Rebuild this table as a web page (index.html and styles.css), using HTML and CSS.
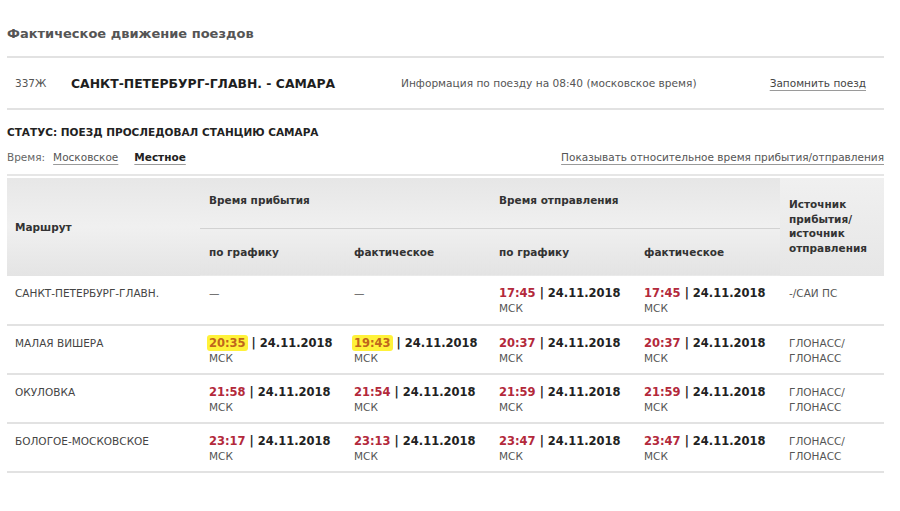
FILE: index.html
```html
<!DOCTYPE html>
<html lang="ru">
<head>
<meta charset="utf-8">
<title>Фактическое движение поездов</title>
<link rel="stylesheet" href="styles.css">
</head>
<body>
<div class="page">
  <h1 class="title">Фактическое движение поездов</h1>
  <div class="train">
    <span class="train-num">337Ж</span>
    <span class="train-route">САНКТ-ПЕТЕРБУРГ-ГЛАВН. - САМАРА</span>
    <span class="train-info">Информация по поезду на 08:40 (московское время)</span>
    <a class="link train-save" href="#">Запомнить поезд</a>
  </div>
  <div class="status">СТАТУС: ПОЕЗД ПРОСЛЕДОВАЛ СТАНЦИЮ САМАРА</div>
  <div class="timebar">
    <span class="time-label">Время:</span>
    <a class="link time-opt" href="#">Московское</a>
    <a class="link time-opt active" href="#">Местное</a>
    <a class="link rel-link" href="#">Показывать относительное время прибытия/отправления</a>
  </div>
  <table class="sched">
    <colgroup>
      <col class="c-route"><col class="c-t"><col class="c-t"><col class="c-t"><col class="c-t"><col class="c-src">
    </colgroup>
    <thead>
      <tr class="h1">
        <th rowspan="2" class="th-route">Маршрут</th>
        <th colspan="2" class="th-group">Время прибытия</th>
        <th colspan="2" class="th-group">Время отправления</th>
        <th rowspan="2" class="th-src">Источник прибытия/ источник отправления</th>
      </tr>
      <tr class="h2">
        <th>по графику</th>
        <th>фактическое</th>
        <th>по графику</th>
        <th>фактическое</th>
      </tr>
    </thead>
    <tbody>
      <tr>
        <td class="st">САНКТ-ПЕТЕРБУРГ-ГЛАВН.</td>
        <td class="dash">—</td>
        <td class="dash">—</td>
        <td><span class="tm">17:45</span><b class="dt"> | 24.11.2018</b><br><span class="tz">МСК</span></td>
        <td><span class="tm">17:45</span><b class="dt"> | 24.11.2018</b><br><span class="tz">МСК</span></td>
        <td class="src">-/САИ ПС</td>
      </tr>
      <tr>
        <td class="st">МАЛАЯ ВИШЕРА</td>
        <td><span class="tm hl">20:35</span><b class="dt"> | 24.11.2018</b><br><span class="tz">МСК</span></td>
        <td><span class="tm hl">19:43</span><b class="dt"> | 24.11.2018</b><br><span class="tz">МСК</span></td>
        <td><span class="tm">20:37</span><b class="dt"> | 24.11.2018</b><br><span class="tz">МСК</span></td>
        <td><span class="tm">20:37</span><b class="dt"> | 24.11.2018</b><br><span class="tz">МСК</span></td>
        <td class="src">ГЛОНАСС/<br>ГЛОНАСС</td>
      </tr>
      <tr>
        <td class="st">ОКУЛОВКА</td>
        <td><span class="tm">21:58</span><b class="dt"> | 24.11.2018</b><br><span class="tz">МСК</span></td>
        <td><span class="tm">21:54</span><b class="dt"> | 24.11.2018</b><br><span class="tz">МСК</span></td>
        <td><span class="tm">21:59</span><b class="dt"> | 24.11.2018</b><br><span class="tz">МСК</span></td>
        <td><span class="tm">21:59</span><b class="dt"> | 24.11.2018</b><br><span class="tz">МСК</span></td>
        <td class="src">ГЛОНАСС/<br>ГЛОНАСС</td>
      </tr>
      <tr>
        <td class="st">БОЛОГОЕ-МОСКОВСКОЕ</td>
        <td><span class="tm">23:17</span><b class="dt"> | 24.11.2018</b><br><span class="tz">МСК</span></td>
        <td><span class="tm">23:13</span><b class="dt"> | 24.11.2018</b><br><span class="tz">МСК</span></td>
        <td><span class="tm">23:47</span><b class="dt"> | 24.11.2018</b><br><span class="tz">МСК</span></td>
        <td><span class="tm">23:47</span><b class="dt"> | 24.11.2018</b><br><span class="tz">МСК</span></td>
        <td class="src">ГЛОНАСС/<br>ГЛОНАСС</td>
      </tr>
    </tbody>
  </table>
</div>
</body>
</html>
```

FILE: styles.css
```css
* { box-sizing: border-box; }
html, body { margin: 0; padding: 0; background: #fff; }
body {
  font-family: "DejaVu Sans", Verdana, sans-serif;
  font-size: 11px;
  color: #444;
}
.page {
  width: 884px;
  padding: 26px 0 0 7px;
}
.title {
  margin: 0;
  font-size: 13px;
  line-height: 16px;
  font-weight: bold;
  color: #555;
  padding-bottom: 14px;
  border-bottom: 2px solid #e2e2e2;
}
.link {
  color: #555;
  text-decoration: underline;
  text-decoration-color: #9a9a9a;
  text-underline-offset: 3px;
}
.train {
  display: flex;
  align-items: center;
  height: 52px;
  padding: 0 18px 0 8px;
  border-bottom: 2px solid #e2e2e2;
}
.train-num {
  width: 56px;
  color: #555;
  font-size: 10.5px;
}
.train-route {
  width: 330px;
  font-weight: bold;
  font-size: 12.4px;
  color: #1e1e1e;
}
.train-info {
  color: #555;
  font-size: 10.6px;
}
.train-save {
  margin-left: auto;
  font-size: 10.5px;
  color: #444;
}
.status {
  padding-top: 15px;
  line-height: 14px;
  font-weight: bold;
  font-size: 10.5px;
  color: #222;
}
.timebar {
  display: flex;
  align-items: baseline;
  margin-top: 11px;
  line-height: 14px;
  font-size: 10.5px;
  padding-bottom: 10px;
  border-bottom: 2px solid #e6e6e6;
}
.time-label { color: #666; margin-right: 8px; }
.time-opt { margin-right: 16px; }
.time-opt.active { font-weight: bold; color: #222; }
.rel-link { margin-left: auto; }
.sched {
  margin-top: 2px;
  width: 877px;
  border-collapse: collapse;
  table-layout: fixed;
}
.c-route { width: 193px; }
.c-t { width: 145px; }
.c-src { width: 104px; }
.sched th {
  text-align: left;
  font-weight: bold;
  font-size: 10.5px;
  color: #333;
  padding: 0 0 0 9px;
  vertical-align: middle;
}
.sched thead {
  background: #ebebeb;
}
.sched .h1 th { height: 50px; }
.sched .h2 th { height: 48px; }
.th-route {
  padding-left: 8px !important;
  background: linear-gradient(#e7e7e7, #f0f0f0 50%, #e4e4e4);
}
.th-group {
  padding-bottom: 6px !important;
  background: linear-gradient(#e6e6e6, #f0f0f0);
  border-bottom: 1px solid #d2d2d2;
}
.h2 th { background: linear-gradient(#efefef, #e3e3e3); }
.th-src {
  line-height: 14.5px;
  padding-bottom: 2px !important;
  background: linear-gradient(#f0f0f0, #e6e6e6);
}
.sched td {
  vertical-align: top;
  height: 49px;
  padding: 10px 0 0 9px;
  line-height: 15px;
  border-bottom: 2px solid #e2e2e2;
  font-size: 10.5px;
  color: #555;
}
.sched td.st { padding-left: 8px; color: #444; }
.sched td.dash { color: #555; }
.tm {
  color: #b3293b;
  font-weight: bold;
  font-size: 11.5px;
}
.tm.hl {
  color: #c0651c;
  background: #fff23a;
  border-radius: 3px;
  padding: 1px 2px;
  margin-left: -2px;
}
.dt {
  color: #222;
  font-size: 11.5px;
}
.tz { color: #555; }
.src { color: #555; }
```
